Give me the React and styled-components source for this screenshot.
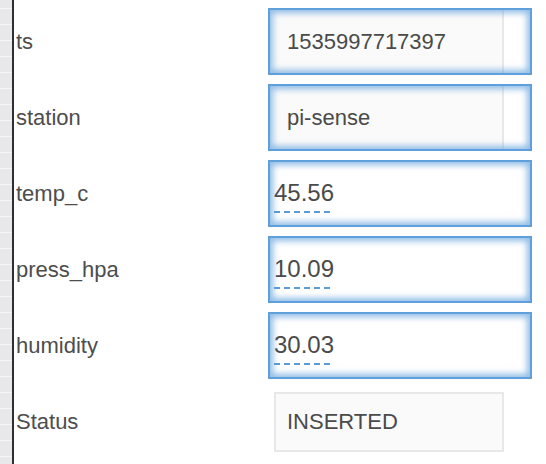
import React from 'react'
import styled, { createGlobalStyle } from 'styled-components'

const GlobalStyle = createGlobalStyle`
  html, body {
    margin: 0;
    padding: 0;
    background: #fff;
  }
  body {
    font-family: "Liberation Sans", Arial, sans-serif;
    color: #4d4d4d;
  }
`

const Page = styled.div`
  display: flex;
  width: 546px;
  height: 464px;
  overflow: hidden;
`

const Gutter = styled.div`
  width: 12px;
  flex-shrink: 0;
  border-right: 2px solid #2e2e2e;
  background-color: #e8e8ea;
  background-image: repeating-linear-gradient(
    to bottom,
    transparent 0 8px,
    #f6f6f7 8px 9px,
    transparent 9px 16px
  );
`

const Form = styled.div`
  display: grid;
  grid-template-columns: 254px 264px;
  grid-auto-rows: 67px;
  row-gap: 9px;
  padding-top: 8px;
  align-content: start;
`

const Label = styled.div`
  display: flex;
  align-items: center;
  padding-left: 2px;
  font-size: 22px;
  color: #4d4d4d;
`

// focus ring drawn as an overlay so it sits on top of the inner field
const Cell = styled.div`
  display: flex;
  align-items: center;
  box-sizing: border-box;
  position: relative;
  border: 2px solid ${(p) => (p.$focused ? '#5f9fdb' : 'transparent')};

  &::after {
    content: '';
    position: absolute;
    inset: 0;
    pointer-events: none;
    box-shadow: ${(p) =>
      p.$focused ? 'inset 0 0 6px 3px rgba(95, 159, 219, 0.7)' : 'none'};
  }
`

const Field = styled.div`
  box-sizing: border-box;
  width: 230px;
  height: ${(p) => (p.$full ? '100%' : '60px')};
  margin-left: 4px;
  display: flex;
  align-items: center;
  background: #fafafa;
  border: 2px solid #e8e8e8;
  border-width: ${(p) => (p.$full ? '0 2px 0 0' : '2px')};
  padding-left: ${(p) => (p.$full ? '13px' : '11px')};
  font-size: 22px;
  color: #4a4a4a;
`

const EditWrap = styled.div`
  padding-left: 4px;
`

const Editable = styled.span`
  display: inline-block;
  font-size: 24px;
  line-height: 26px;
  color: #4a4a4a;
  padding-bottom: 7px;
  margin-top: 6px;
  background-image: repeating-linear-gradient(
    to right,
    #5b9bd6 0 6px,
    transparent 6px 10px
  );
  background-size: 100% 2px;
  background-position: left bottom;
  background-repeat: no-repeat;
`

const rows = [
  { label: 'ts', value: '1535997717397', kind: 'field', focused: true },
  { label: 'station', value: 'pi-sense', kind: 'field', focused: true },
  { label: 'temp_c', value: '45.56', kind: 'edit', focused: true },
  { label: 'press_hpa', value: '10.09', kind: 'edit', focused: true },
  { label: 'humidity', value: '30.03', kind: 'edit', focused: true },
  { label: 'Status', value: 'INSERTED', kind: 'field', focused: false },
]

export default function App() {
  return (
    <>
      <GlobalStyle />
      <Page>
        <Gutter />
        <Form>
          {rows.map((row) => (
            <React.Fragment key={row.label}>
              <Label>{row.label}</Label>
              <Cell $focused={row.focused}>
                {row.kind === 'field' ? (
                  <Field $full={row.focused}>{row.value}</Field>
                ) : (
                  <EditWrap>
                    <Editable>{row.value}</Editable>
                  </EditWrap>
                )}
              </Cell>
            </React.Fragment>
          ))}
        </Form>
      </Page>
    </>
  )
}
